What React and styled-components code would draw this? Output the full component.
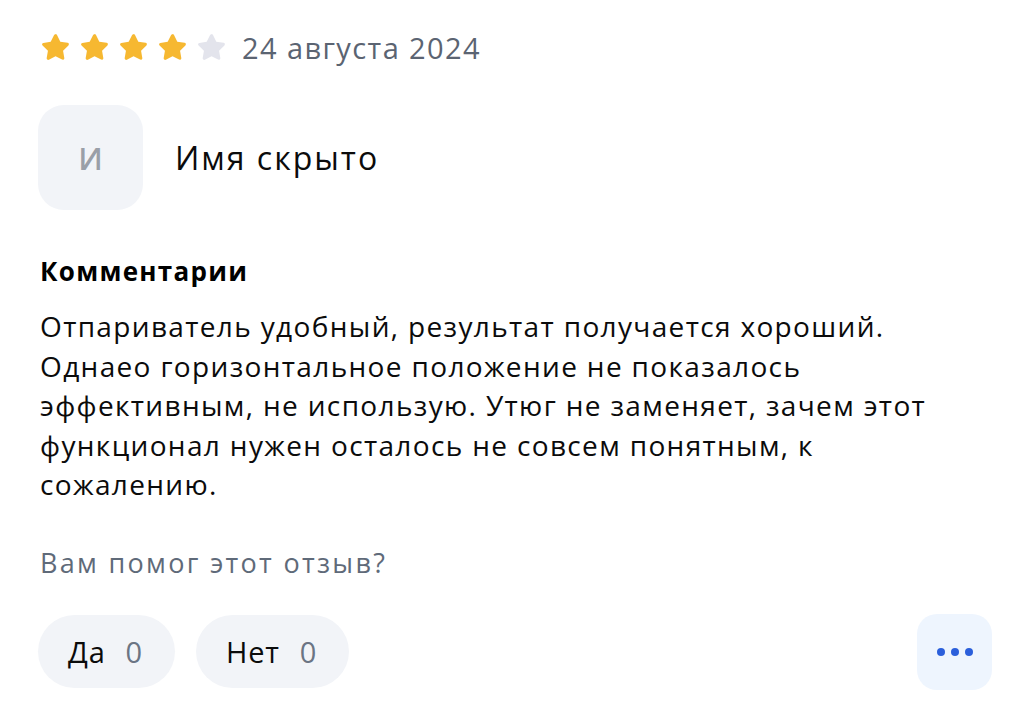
import React from 'react'
import styled, { createGlobalStyle } from 'styled-components'

const GlobalStyle = createGlobalStyle`
    html, body {
        margin: 0;
        padding: 0;
        background: #ffffff;
    }
    body {
        font-family: "Open Sans", "Noto Sans", sans-serif;
        color: #000000;
    }
`

const Review = styled.section`
    width: 1032px;
    height: 705px;
    box-sizing: border-box;
    padding: 30px 40px 0 38px;
    display: flex;
    flex-direction: column;
    overflow: hidden;
`

const RatingRow = styled.div`
    display: flex;
    align-items: center;
    height: 34px;
    padding-left: 1px;
`

const Stars = styled.div`
    display: flex;
    gap: 6px;
    margin-right: 14px;
`

const DateText = styled.span`
    font-size: 29px;
    color: #5b6472;
    letter-spacing: 1.4px;
`

const Author = styled.div`
    display: flex;
    align-items: center;
    gap: 32px;
    margin-top: 41px;
`

const Avatar = styled.div`
    width: 105px;
    height: 105px;
    border-radius: 26px;
    background: #f2f4f8;
    display: flex;
    align-items: center;
    justify-content: center;
    font-size: 31px;
    font-weight: 600;
    color: #9a9fa8;
`

const Name = styled.span`
    font-size: 32px;
    color: #0b0b0b;
    letter-spacing: 2px;
`

const Heading = styled.h3`
    margin: 45px 0 0 2px;
    font-size: 26px;
    font-weight: 700;
    line-height: 32px;
    letter-spacing: 1.3px;
`

const Body = styled.p`
    margin: 20px 0 0 2px;
    font-size: 28px;
    line-height: 39.5px;
    color: #0b0b0b;
    letter-spacing: 1.35px;
`

const Question = styled.p`
    margin: 42px 0 0 2px;
    font-size: 27px;
    line-height: 32px;
    color: #5f6a79;
    letter-spacing: 2.3px;
`

const Actions = styled.div`
    display: flex;
    align-items: center;
    gap: 21px;
    margin-top: 35px;
`

const Vote = styled.button`
    height: 73px;
    padding: 0 32px 0 30px;
    border: none;
    border-radius: 37px;
    background: #f2f4f8;
    display: flex;
    align-items: center;
    gap: 20px;
    font-family: inherit;
    font-size: 29px;
    letter-spacing: 0.8px;
    color: #0b0b0b;
`

const Count = styled.span`
    color: #6b7584;
`

const More = styled.button`
    margin-left: auto;
    width: 75px;
    height: 76px;
    border: none;
    border-radius: 20px;
    background: #eef5fe;
    display: flex;
    align-items: center;
    justify-content: center;
    gap: 6px;
`

const Dot = styled.span`
    width: 8px;
    height: 8px;
    border-radius: 50%;
    background: #2b5fdb;
`

function Star({ filled }) {
    return (
        <svg width="33" height="33" viewBox="0 0 24 24">
            <path
                d="M12 2.2c.5 0 .9.3 1.1.7l2.4 4.9 5.3.8c.9.1 1.3 1.2.6 1.9l-3.9 3.8.9 5.3c.2.9-.8 1.6-1.6 1.2L12 18.4l-4.8 2.5c-.8.4-1.8-.3-1.6-1.2l.9-5.3-3.9-3.8c-.7-.7-.3-1.8.6-1.9l5.3-.8 2.4-4.9c.2-.4.6-.7 1.1-.7z"
                fill={filled ? '#f6b831' : '#e3e4ec'}
            />
        </svg>
    )
}

function App() {
    const rating = 4

    return (
        <>
            <GlobalStyle />
            <Review>
                <RatingRow>
                    <Stars>
                        {[1, 2, 3, 4, 5].map(i => <Star key={i} filled={i <= rating} />)}
                    </Stars>
                    <DateText>24 августа 2024</DateText>
                </RatingRow>

                <Author>
                    <Avatar>И</Avatar>
                    <Name>Имя скрыто</Name>
                </Author>

                <Heading>Комментарии</Heading>
                <Body>
                    Отпариватель удобный, результат получается хороший.<br />
                    Однаео горизонтальное положение не показалось<br />
                    эффективным, не использую. Утюг не заменяет, зачем этот<br />
                    функционал нужен осталось не совсем понятным, к<br />
                    сожалению.
                </Body>

                <Question>Вам помог этот отзыв?</Question>

                <Actions>
                    <Vote>Да <Count>0</Count></Vote>
                    <Vote>Нет <Count>0</Count></Vote>
                    <More>
                        <Dot />
                        <Dot />
                        <Dot />
                    </More>
                </Actions>
            </Review>
        </>
    )
}

export default App
